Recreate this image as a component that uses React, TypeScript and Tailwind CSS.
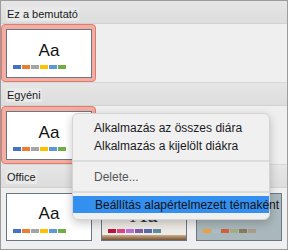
import React from "react";

const office = ["bg-[#4472c4]", "bg-[#ed7d31]", "bg-[#a5a5a5]", "bg-[#ffc000]", "bg-[#5b9bd5]", "bg-[#70ad47]"];
const berry = ["bg-[#b5193f]", "bg-[#e0407f]", "bg-[#b870d8]", "bg-[#7d5ba6]", "bg-[#5a6aa6]", "bg-[#5b8f9b]"];
const slate = ["bg-[#f0a040]", "bg-[#a9bfc5]", "bg-[#d2603a]", "bg-[#a5ab86]", "bg-[#857a5b]", "bg-[#a99c8a]"];

function Swatches({ colors }: { colors: string[] }) {
  return (
    <div className="flex gap-[1px] pl-[6px]">
      {colors.map((c, i) => (
        <div key={i} className={`w-[8px] h-[4px] ${c}`} />
      ))}
    </div>
  );
}

function OfficeThumb() {
  return (
    <div className="w-[86px] h-[49px] bg-white border border-[#6b7685] flex flex-col pt-[12px]">
      <div className="text-[17px] leading-[17px] text-center text-[#111]">Aa</div>
      <div className="mt-[6px]">
        <Swatches colors={office} />
      </div>
    </div>
  );
}

function Header({ label, first }: { label: string; first?: boolean }) {
  return (
    <div
      className={`h-[23px] flex items-center px-[5px] bg-gradient-to-b from-[#e6e6e6] to-[#dddddd] border-b border-[#d2d2d2] ${
        first ? "pt-[3px]" : "h-[24px] border-t border-t-[#d8d8d8] pt-[2px]"
      }`}
    >
      <span className="text-[11px] text-[#1a1a1a] bg-[#e9e9e9] px-[1px] leading-[14px]">{label}</span>
    </div>
  );
}

function Selected() {
  return (
    <div className="w-[95px] h-[58px] rounded-[4px] border border-[#e07a6c] bg-[#f3ada3] p-[4px]">
      <OfficeThumb />
    </div>
  );
}

export default function App() {
  return (
    <div
      className="relative w-[288px] h-[250px] bg-[#efefef] border border-[#9c9c9c] overflow-hidden flex flex-col"
      style={{ fontFamily: '"Liberation Sans", Arial, sans-serif' }}
    >
      <Header label="Ez a bemutató" first />
      <div className="h-[58px] flex">
        <Selected />
      </div>
      <Header label="Egyéni" />
      <div className="h-[58px] flex">
        <Selected />
      </div>
      <Header label="Office" />
      <div className="flex-1 flex">
        <div className="w-[95px] pl-[5px] pt-[5px]">
          <div className="w-[86px] h-[48px] bg-white border border-[#6b7685] flex flex-col pt-[11px]">
            <div className="text-[17px] leading-[17px] text-center text-[#111]">Aa</div>
            <div className="mt-[7px]">
              <Swatches colors={office} />
            </div>
          </div>
        </div>
        <div className="w-[95px] pl-[5px] pt-[5px]">
          <div className="w-[86px] h-[48px] bg-[#eeebe6] border border-[#6b7685] flex flex-col">
            <div
              className="h-[32px] pt-[7px] text-[24px] leading-[26px] text-center text-[#333]"
              style={{ fontFamily: '"Liberation Serif", serif' }}
            >
              Aa
            </div>
            <div className="mt-[3px]">
              <Swatches colors={berry} />
            </div>
            <div className="mt-[2px] h-[5px] bg-gradient-to-b from-[#c9b191] to-[#7a5432]" />
          </div>
        </div>
        <div className="w-[95px] pl-[5px] pt-[5px]">
          <div className="w-[86px] h-[48px] bg-[#a9b8bc] border border-[#6b7685] flex flex-col">
            <div className="h-[32px] pt-[8px] text-[19px] leading-[22px] text-center text-[#333]">Aa</div>
            <div className="mt-[3px]">
              <Swatches colors={slate} />
            </div>
          </div>
        </div>
      </div>

      <div className="absolute left-[71px] top-[112px] w-[198px] h-[107px] bg-[#f0f0f0] rounded-[6px] border border-[#d4d4d4] shadow-[0_3px_10px_rgba(0,0,0,0.22)] pt-[5px] text-[12px] text-[#1a1a24] z-10">
        <div className="h-[18px] leading-[18px] px-[21px] whitespace-nowrap">Alkalmazás az összes diára</div>
        <div className="h-[18px] leading-[18px] px-[21px] whitespace-nowrap">Alkalmazás a kijelölt diákra</div>
        <div className="mt-[5px] h-[2px] bg-[#dcdcdc]" />
        <div className="mt-[6px] h-[18px] leading-[18px] px-[21px] whitespace-nowrap text-[#555]">Delete...</div>
        <div className="mt-[5px] h-[2px] bg-[#dcdcdc]" />
        <div className="mt-[3px] h-[17px] leading-[19px] pl-[22px] whitespace-nowrap bg-[#3490f0] text-[#111]">
          Beállítás alapértelmezett témaként
        </div>
      </div>
    </div>
  );
}
